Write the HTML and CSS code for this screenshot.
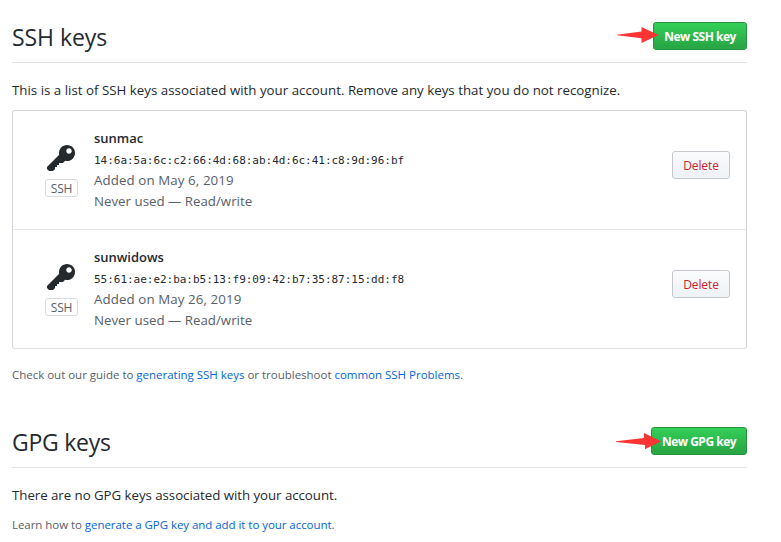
FILE: index.html
```html
<!DOCTYPE html>
<html lang="en">
<head>
<meta charset="utf-8">
<title>SSH and GPG keys</title>
<link rel="stylesheet" href="styles.css">
</head>
<body>
<svg class="defs" aria-hidden="true"><symbol id="key" viewBox="0 0 14 16"><path fill-rule="evenodd" d="M12.83 2.17C12.08 1.42 11.14 1.03 10 1c-1.13.03-2.08.42-2.83 1.17S6.04 3.86 6.01 5c0 .3.03.59.09.89L0 12v1l1 1h2l1-1v-1h1v-1h1v-1h2l1.09-1.11c.3.08.59.11.91.11 1.14-.03 2.08-.42 2.83-1.17S13.97 6.14 14 5c-.03-1.14-.42-2.08-1.17-2.83zM11 5.38c-.77 0-1.38-.61-1.38-1.38 0-.77.61-1.38 1.38-1.38.77 0 1.38.61 1.38 1.38 0 .77-.61 1.38-1.38 1.38z"/></symbol></svg>
<main>
  <section class="ssh">
    <header class="subhead">
      <h2>SSH keys</h2>
      <div class="action">
        <button class="btn primary new-ssh">New SSH key</button>
        <svg class="arrow arrow-ssh" viewBox="0 0 42 17"><path d="M0 7.7 24.5 4.5V0L41.5 8 24.5 16V11.3L0 8.3z"/></svg>
      </div>
    </header>
    <p class="intro">This is a list of SSH keys associated with your account. Remove any keys that you do not recognize.</p>
    <ul class="keys">
      <li class="key">
        <div class="type"><svg class="icon"><use href="#key"/></svg><span class="label">SSH</span></div>
        <div class="info">
          <strong>sunmac</strong>
          <code>14:6a:5a:6c:c2:66:4d:68:ab:4d:6c:41:c8:9d:96:bf</code>
          <span class="meta date">Added on May 6, 2019</span>
          <span class="meta">Never used — Read/write</span>
        </div>
        <button class="btn delete">Delete</button>
      </li>
      <li class="key">
        <div class="type"><svg class="icon"><use href="#key"/></svg><span class="label">SSH</span></div>
        <div class="info">
          <strong>sunwidows</strong>
          <code>55:61:ae:e2:ba:b5:13:f9:09:42:b7:35:87:15:dd:f8</code>
          <span class="meta date">Added on May 26, 2019</span>
          <span class="meta">Never used — Read/write</span>
        </div>
        <button class="btn delete">Delete</button>
      </li>
    </ul>
    <p class="help">Check out our guide to <a>generating SSH keys</a> or troubleshoot <a>common SSH Problems</a>.</p>
  </section>
  <section class="gpg">
    <header class="subhead">
      <h2>GPG keys</h2>
      <div class="action">
        <button class="btn primary new-gpg">New GPG key</button>
        <svg class="arrow arrow-gpg" viewBox="0 0 45 17"><path d="M0 8.2 28 5V0L45 8.3 29 16.3V12L0 9z"/></svg>
      </div>
    </header>
    <p class="intro">There are no GPG keys associated with your account.</p>
    <p class="help">Learn how to <a>generate a GPG key and add it to your account</a>.</p>
  </section>
</main>
</body>
</html>
```
FILE: styles.css
```css
* { box-sizing: border-box; }
body { margin: 0; background: #fff; color: #24292e; font: 13.3px/21px "Open Sans", "Noto Sans", sans-serif; }
.defs { position: absolute; width: 0; height: 0; }
main { width: 781px; height: 542px; padding: 12px 34px 0 12px; overflow: hidden; }
h2, p, ul { margin: 0; padding: 0; }
.subhead { display: flex; align-items: center; justify-content: space-between; height: 51px; border-bottom: 1px solid #e1e4e8; }
h2 { font-size: 23px; line-height: 36px; font-weight: 400; letter-spacing: -0.05px; }
.gpg h2 { letter-spacing: -0.25px; }
.action { position: relative; display: flex; margin-bottom: 2px; }
.btn { height: 28px; padding: 1px 0 0; border: 1px solid #c5c9cd; border-radius: 3px; font: 600 12px/20px "Open Sans", sans-serif; white-space: nowrap; }
.primary { color: #fff; border-color: #269240; background: linear-gradient(#34d058, #28a745 90%); font-weight: 700; letter-spacing: -0.5px; }
.new-ssh { width: 94px; }
.new-gpg { width: 96px; }
.arrow { position: absolute; fill: #fc3434; }
.arrow-ssh { width: 42px; height: 17px; left: -36px; top: 5px; }
.arrow-gpg { width: 45px; height: 17px; left: -35px; top: 6px; }
.intro { margin-top: 17px; white-space: nowrap; letter-spacing: 0.01px; }
.gpg .intro { letter-spacing: -0.05px; }
.keys { list-style: none; margin-top: 9px; border: 1px solid #d1d5da; border-bottom-color: #dcdfe3; border-radius: 3px; }
.key { display: flex; align-items: flex-start; height: 118px; padding: 17px 16px 0 32px; }
.key + .key { height: 119px; border-top: 1px solid #e1e4e8; }
.type { display: flex; flex-direction: column; align-items: center; width: 33px; margin: 15px 16px 0 0; }
.icon { width: 28px; height: 32px; fill: #24292e; margin-right: 1px; }
.label { width: 33px; height: 18px; margin-top: 4px; border: 1px solid #d8dbdf; border-radius: 3px; color: #586069; font-size: 12px; line-height: 17px; text-align: center; letter-spacing: -0.2px; }
.info { flex: 1; display: flex; flex-direction: column; white-space: nowrap; }
.info strong { font-size: 13px; font-weight: 600; letter-spacing: -0.02px; }
code { height: 21px; padding-top: 1px; font: 11px/21px "DejaVu Sans Mono", monospace; letter-spacing: -0.025px; }
.meta { color: #586069; }
.date { letter-spacing: 0.1px; }
.delete { width: 58px; margin-top: 23px; color: #cb2431; font-weight: 500; background: linear-gradient(#fafbfc, #eff3f6 90%); letter-spacing: -0.1px; }
.help { margin-top: 17px; color: #586069; font-size: 11.5px; line-height: 18px; letter-spacing: -0.015px; white-space: nowrap; }
.help a { color: #0366d6; }
.gpg { margin-top: 33px; }
.gpg .help { margin-top: 10px; letter-spacing: -0.05px; }
```
